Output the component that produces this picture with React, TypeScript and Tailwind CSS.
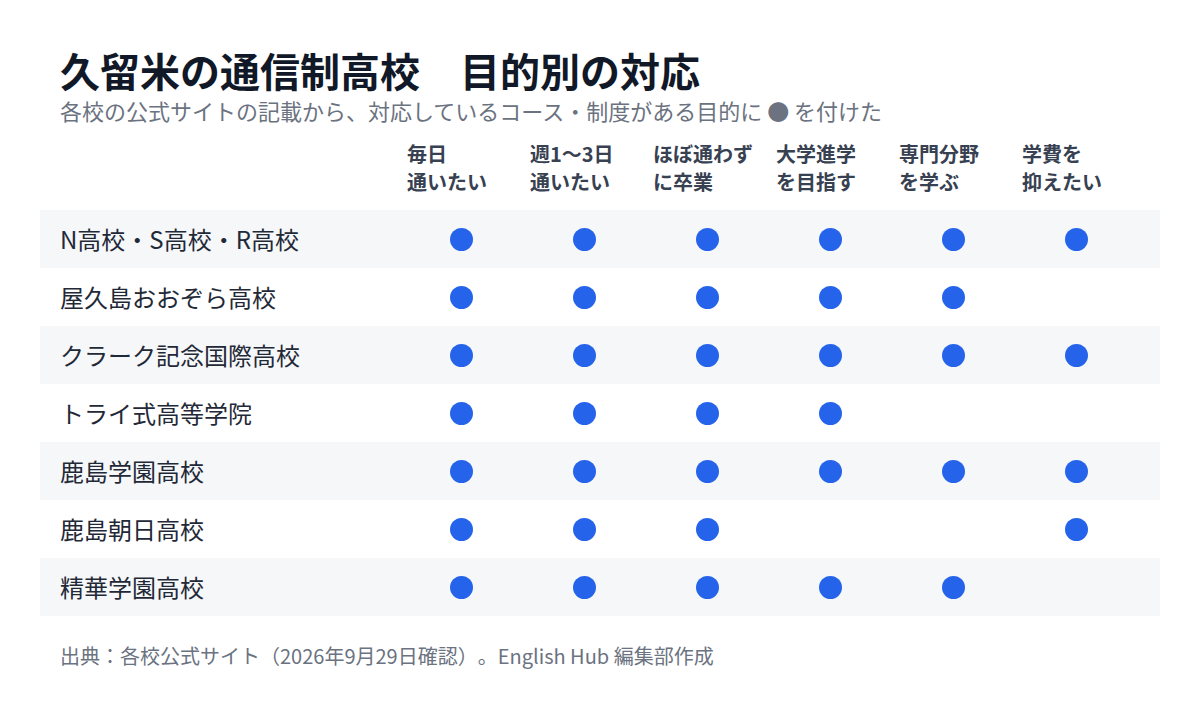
import React from "react";

const headers: [string, string][] = [
  ["毎日", "通いたい"],
  ["週1〜3日", "通いたい"],
  ["ほぼ通わず", "に卒業"],
  ["大学進学", "を目指す"],
  ["専門分野", "を学ぶ"],
  ["学費を", "抑えたい"],
];

const rows: { name: string; marks: boolean[] }[] = [
  { name: "N高校・S高校・R高校", marks: [true, true, true, true, true, true] },
  { name: "屋久島おおぞら高校", marks: [true, true, true, true, true, false] },
  { name: "クラーク記念国際高校", marks: [true, true, true, true, true, true] },
  { name: "トライ式高等学院", marks: [true, true, true, true, false, false] },
  { name: "鹿島学園高校", marks: [true, true, true, true, true, true] },
  { name: "鹿島朝日高校", marks: [true, true, true, false, false, true] },
  { name: "精華学園高校", marks: [true, true, true, true, true, false] },
];

export default function App() {
  return (
    <div
      className="w-[1200px] h-[704px] bg-white px-[40px] pt-[46px] [text-spacing-trim:space-all]"
      style={{ fontFamily: '"Noto Sans CJK JP", "Noto Sans", sans-serif' }}
    >
      <h1 className="pl-5 text-[40px] leading-[48px] font-bold text-[#111827] whitespace-pre">
        久留米の通信制高校　目的別の対応
      </h1>
      <p className="pl-5 mt-[1px] text-[22px] leading-[30px] text-[#6b7280] whitespace-pre">
        各校の公式サイトの記載から、対応しているコース・制度がある目的に ● を付けた
      </p>

      <div className="mt-[15px] grid grid-cols-[360px_repeat(6,123px)]">
        <div />
        {headers.map(([a, b], i) => (
          <div key={i} className="pl-[7px] text-[20px] leading-[28px] font-bold text-[#374151]">
            <div>{a}</div>
            <div>{b}</div>
          </div>
        ))}
      </div>

      <div className="mt-[14px] flex flex-col">
        {rows.map((r, i) => (
          <div
            key={i}
            className={`grid grid-cols-[360px_repeat(6,123px)] h-[58px] items-center ${
              i % 2 === 0 ? "bg-[#f6f7f9]" : "bg-white"
            }`}
          >
            <div className="pl-5 text-[24px] leading-[32px] text-[#1f2937] whitespace-nowrap">{r.name}</div>
            {r.marks.map((m, j) => (
              <div key={j} className="flex items-center justify-center">
                {m && <div className="w-[23px] h-[23px] rounded-full bg-[#2563eb]" />}
              </div>
            ))}
          </div>
        ))}
      </div>

      <p className="pl-5 mt-[26px] text-[20px] leading-[28px] text-[#6b7280] whitespace-pre">
        出典：各校公式サイト（2026年9月29日確認）。English Hub 編集部作成
      </p>
    </div>
  );
}
